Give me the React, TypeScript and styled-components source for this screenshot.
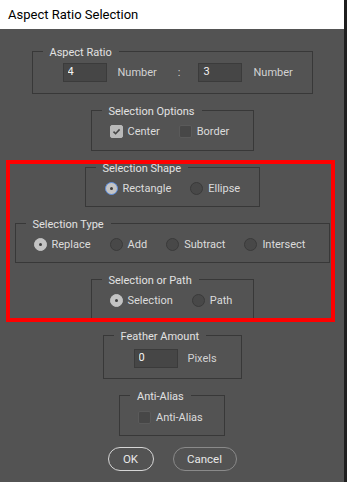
import React from "react";
import styled, { createGlobalStyle } from "styled-components";

const GlobalStyle = createGlobalStyle`
  html, body {
    margin: 0;
    padding: 0;
    background: #535353;
  }
  body {
    font-family: Roboto, "Liberation Sans", sans-serif;
  }
`;

const Frame = styled.div`
  display: flex;
  width: 347px;
  height: 482px;
  overflow: hidden;
`;

const Dialog = styled.div`
  flex: 1;
  display: flex;
  flex-direction: column;
  background: #535353;
`;

const Edge = styled.div`
  width: 3px;
  flex: none;
  background: #1f1f1f;
`;

const TitleBar = styled.div`
  flex: none;
  height: 29px;
  display: flex;
  align-items: center;
  padding-left: 8px;
  background: #ffffff;
  color: #000000;
  font-size: 13px;
`;

const Body = styled.div`
  display: flex;
  flex-direction: column;
  align-items: center;
  gap: 9px;
  padding-top: 15px;
`;

// red annotation box drawn over the three highlighted groups
const Highlight = styled.div`
  position: relative;
  align-self: stretch;
  display: flex;
  flex-direction: column;
  align-items: center;
  gap: 9px;

  &::after {
    content: "";
    position: absolute;
    top: 0;
    bottom: -3px;
    left: 6px;
    right: 9px;
    border: 4px solid #ff0000;
    pointer-events: none;
  }
`;

const Group = styled.fieldset<{ $width: number }>`
  box-sizing: border-box;
  width: ${(p) => p.$width}px;
  min-width: 0;
  margin: 0;
  padding: 0;
  border: 1px solid #383838;
`;

// text sits a little below the border line, as in the original dialog
const Legend = styled.legend`
  margin-left: 10px;
  padding: 4px 7px 0;
  font-size: 11px;
  line-height: 10px;
  color: #e2e2e2;
`;

const Row = styled.div<{ $pt: number; $pb: number; $pl: number; $gap?: number }>`
  display: flex;
  align-items: center;
  height: 20px;
  gap: ${(p) => p.$gap ?? 19}px;
  padding: ${(p) => `${p.$pt}px 0 ${p.$pb}px ${p.$pl}px`};
`;

const Option = styled.label`
  display: flex;
  align-items: center;
  gap: 5px;
  font-size: 11px;
  color: #dcdcdc;
  white-space: nowrap;
`;

const Label = styled.span`
  font-size: 11px;
  color: #d2d2d2;
`;

const Colon = styled.span`
  margin: 0 7px 0 10px;
  font-size: 11px;
  color: #d2d2d2;
`;

const Field = styled.input`
  box-sizing: border-box;
  width: 44px;
  height: 19px;
  margin: 0;
  padding: 0 0 2px 4px;
  border: 1px solid #3b3b3b;
  background: #464646;
  color: #f4f4f4;
  font-family: Roboto, "Liberation Sans", sans-serif;
  font-size: 11px;
  outline: none;
`;

const Box = styled.span<{ $checked?: boolean }>`
  box-sizing: border-box;
  width: 13px;
  height: 13px;
  flex: none;
  display: flex;
  align-items: center;
  justify-content: center;
  border-radius: 2px;
  border: 1px solid ${(p) => (p.$checked ? "#b9b9b9" : "#5a5a5a")};
  background: ${(p) => (p.$checked ? "#b9b9b9" : "#474747")};
`;

const Radio = styled.span<{ $checked?: boolean; $focus?: boolean }>`
  box-sizing: border-box;
  width: 13px;
  height: 13px;
  flex: none;
  display: flex;
  align-items: center;
  justify-content: center;
  border-radius: 50%;
  border: ${(p) => (p.$focus ? "1.5px solid #5d8fe0" : `1px solid ${p.$checked ? "#c4c4c4" : "#3a3a3a"}`)};
  background: ${(p) => (p.$checked ? "#c4c4c4" : "#484848")};

  &::after {
    content: "";
    display: ${(p) => (p.$checked ? "block" : "none")};
    width: 3px;
    height: 3px;
    border-radius: 50%;
    background: #3e3e3e;
  }
`;

const Buttons = styled.div`
  display: flex;
  gap: 19px;
  margin-top: 2px;
`;

const Button = styled.button<{ $primary?: boolean; $width: number }>`
  box-sizing: border-box;
  width: ${(p) => p.$width}px;
  height: 24px;
  padding: 0;
  border-radius: 12px;
  background: transparent;
  border: ${(p) => (p.$primary ? "1.5px solid #d6d6d6" : "1px solid #8a8a8a")};
  color: #e8e8e8;
  font-family: Roboto, "Liberation Sans", sans-serif;
  font-size: 11.5px;
`;

const Check = () => (
  <svg width="9" height="9" viewBox="0 0 9 9">
    <polyline points="1.5,4.6 3.6,6.7 7.6,2.4" fill="none" stroke="#454545" strokeWidth="1.6" />
  </svg>
);

const CheckOption = ({ label, checked }: { label: string; checked?: boolean }) => (
  <Option>
    <Box $checked={checked}>{checked && <Check />}</Box>
    {label}
  </Option>
);

const RadioOption = ({ label, checked, focus }: { label: string; checked?: boolean; focus?: boolean }) => (
  <Option>
    <Radio $checked={checked} $focus={focus} />
    {label}
  </Option>
);

export default function App() {
  return (
    <Frame>
      <GlobalStyle />
      <Dialog>
        <TitleBar>Aspect Ratio Selection</TitleBar>
        <Body>
          <Group $width={281}>
            <Legend>Aspect Ratio</Legend>
            <Row $pt={4} $pb={11} $pl={30} $gap={11}>
              <Field defaultValue="4" />
              <Label>Number</Label>
              <Colon>:</Colon>
              <Field defaultValue="3" />
              <Label>Number</Label>
            </Row>
          </Group>

          <Group $width={163}>
            <Legend>Selection Options</Legend>
            <Row $pt={4} $pb={9} $pl={18}>
              <CheckOption label="Center" checked />
              <CheckOption label="Border" />
            </Row>
          </Group>

          <Highlight>
            <Group $width={175}>
              <Legend>Selection Shape</Legend>
              <Row $pt={4} $pb={8} $pl={19}>
                <RadioOption label="Rectangle" checked focus />
                <RadioOption label="Ellipse" />
              </Row>
            </Group>

            <Group $width={315}>
              <Legend>Selection Type</Legend>
              <Row $pt={4} $pb={8} $pl={18}>
                <RadioOption label="Replace" checked />
                <RadioOption label="Add" />
                <RadioOption label="Subtract" />
                <RadioOption label="Intersect" />
              </Row>
            </Group>

            <Group $width={163}>
              <Legend>Selection or Path</Legend>
              <Row $pt={4} $pb={8} $pl={18}>
                <RadioOption label="Selection" checked />
                <RadioOption label="Path" />
              </Row>
            </Group>
          </Highlight>

          <Group $width={139}>
            <Legend>Feather Amount</Legend>
            <Row $pt={6} $pb={10} $pl={30} $gap={10}>
              <Field defaultValue="0" />
              <Label>Pixels</Label>
            </Row>
          </Group>

          <Group $width={106}>
            <Legend>Anti-Alias</Legend>
            <Row $pt={5} $pb={8} $pl={18}>
              <CheckOption label="Anti-Alias" />
            </Row>
          </Group>

          <Buttons>
            <Button $primary $width={46}>OK</Button>
            <Button $width={64}>Cancel</Button>
          </Buttons>
        </Body>
      </Dialog>
      <Edge />
    </Frame>
  );
}
